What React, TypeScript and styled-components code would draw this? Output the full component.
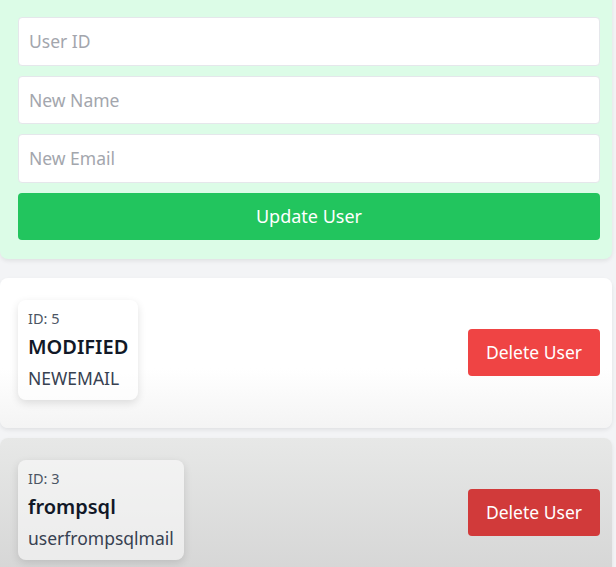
import React from 'react'
import styled, { createGlobalStyle } from 'styled-components'

interface User {
  id: number
  name: string
  email: string
}

const users: User[] = [
  { id: 5, name: 'MODIFIED', email: 'NEWEMAIL' },
  { id: 3, name: 'frompsql', email: 'userfrompsqlmail' },
]

const GlobalStyle = createGlobalStyle`
  html, body {
    margin: 0;
    padding: 0;
    background: #f3f4f6;
    font-family: 'Noto Sans', 'Open Sans', sans-serif;
    overflow: hidden;
  }
  * {
    box-sizing: border-box;
  }
`

const App: React.FC = () => {
  return (
    <>
      <GlobalStyle />
      <StyledPage>
        <StyledPanel>
          <StyledHeading>Update User</StyledHeading>
          <StyledInput placeholder="User ID" />
          <StyledInput placeholder="New Name" />
          <StyledInput placeholder="New Email" />
          <StyledUpdateButton>Update User</StyledUpdateButton>
        </StyledPanel>
        <StyledList>
          {users.map((user, i) => (
            <StyledCard key={user.id} dimmed={i > 0}>
              <StyledInfo>
                <StyledId>ID: {user.id}</StyledId>
                <StyledName>{user.name}</StyledName>
                <StyledEmail>{user.email}</StyledEmail>
              </StyledInfo>
              <StyledDeleteButton dimmed={i > 0}>Delete User</StyledDeleteButton>
            </StyledCard>
          ))}
        </StyledList>
      </StyledPage>
    </>
  )
}

const StyledPage = styled.div`
  width: 612px;
  margin-top: -50px;
  display: flex;
  flex-direction: column;
  gap: 19px;
`

const StyledPanel = styled.div`
  background: #dcfce7;
  border-radius: 8px;
  box-shadow: 0 2px 4px rgba(0, 0, 0, 0.08);
  padding: 16px 12px 19px 18px;
  display: flex;
  flex-direction: column;
  gap: 10px;
`

const StyledHeading = styled.h2`
  margin: 0 0 1px;
  height: 40px;
  text-align: center;
  font-size: 24px;
  font-weight: 600;
  color: #1f2937;
`

const StyledInput = styled.input`
  height: 48.5px;
  width: 100%;
  border: 1px solid #e5e7eb;
  border-radius: 4px;
  background: #ffffff;
  padding: 0 10px;
  font-family: inherit;
  font-size: 17.5px;
  color: #374151;
  outline: none;
  &::placeholder {
    color: #a3a6ad;
  }
`

const StyledUpdateButton = styled.button`
  height: 47px;
  width: 100%;
  border: none;
  border-radius: 4px;
  background: #22c55e;
  color: #ffffff;
  font-family: inherit;
  font-size: 18px;
`

const StyledList = styled.div`
  display: flex;
  flex-direction: column;
  gap: 10px;
`

const StyledCard = styled.div<{ dimmed: boolean }>`
  display: flex;
  align-items: center;
  justify-content: space-between;
  padding: 22px 12px 28px 18px;
  border-radius: 8px;
  background: ${(props) =>
    props.dimmed
      ? 'linear-gradient(#e7e8e7, #d4d4d4)'
      : 'linear-gradient(#ffffff 60%, #f4f4f4)'};
  box-shadow: 0 2px 4px rgba(0, 0, 0, 0.08);
`

const StyledInfo = styled.div`
  display: flex;
  flex-direction: column;
  padding: 6px 10px 8px;
  border-radius: 8px;
  background: rgba(255, 255, 255, 0.5);
  box-shadow: 0 3px 8px rgba(0, 0, 0, 0.12);
`

const StyledId = styled.div`
  font-size: 14.5px;
  line-height: 24px;
  color: #4b5563;
`

const StyledName = styled.div`
  font-size: 20px;
  line-height: 34px;
  font-weight: 600;
  color: #111827;
`

const StyledEmail = styled.div`
  font-size: 17.5px;
  line-height: 28px;
  color: #374151;
`

const StyledDeleteButton = styled.button<{ dimmed: boolean }>`
  height: 47px;
  margin-top: 5px;
  padding: 0 18px;
  border: none;
  border-radius: 4px;
  background: ${(props) => (props.dimmed ? '#d13a3a' : '#ef4444')};
  color: #ffffff;
  font-family: inherit;
  font-size: 17.5px;
`

export default App
